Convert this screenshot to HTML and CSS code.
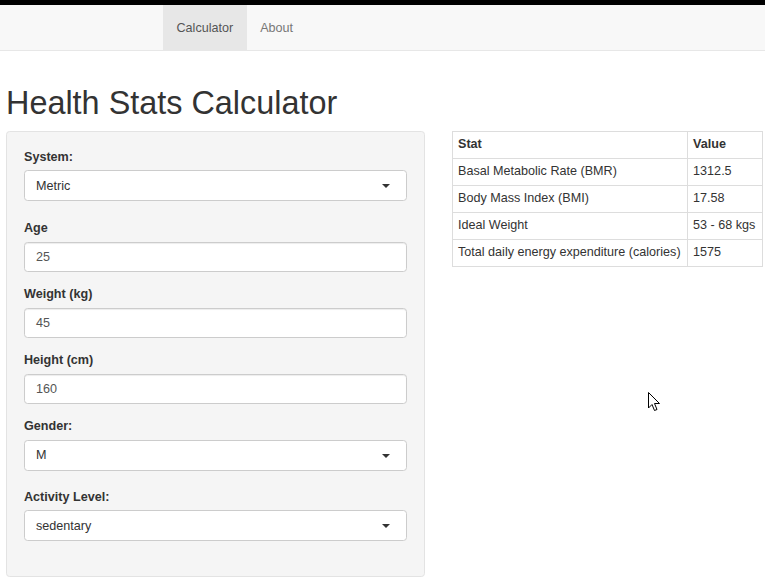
FILE: index.html
```html
<!DOCTYPE html>
<html>
<head>
<meta charset="utf-8">
<title>Health Stats Calculator</title>
<link rel="stylesheet" href="styles.css">
</head>
<body>
<nav class="navbar">
  <ul class="nav">
    <li class="nav-item active">Calculator</li>
    <li class="nav-item">About</li>
  </ul>
</nav>
<main class="page">
  <h1 class="title">Health Stats Calculator</h1>
  <div class="row">
    <form class="well">
      <div class="group group-select">
        <label class="label">System:</label>
        <div class="select">Metric<span class="caret"></span></div>
      </div>
      <div class="group">
        <label class="label">Age</label>
        <div class="input">25</div>
      </div>
      <div class="group">
        <label class="label">Weight (kg)</label>
        <div class="input">45</div>
      </div>
      <div class="group">
        <label class="label">Height (cm)</label>
        <div class="input">160</div>
      </div>
      <div class="group group-select">
        <label class="label">Gender:</label>
        <div class="select">M<span class="caret"></span></div>
      </div>
      <div class="group group-select">
        <label class="label">Activity Level:</label>
        <div class="select">sedentary<span class="caret"></span></div>
      </div>
    </form>
    <div class="results">
      <table class="table">
        <thead>
          <tr><th>Stat</th><th>Value</th></tr>
        </thead>
        <tbody>
          <tr><td>Basal Metabolic Rate (BMR)</td><td>1312.5</td></tr>
          <tr><td>Body Mass Index (BMI)</td><td>17.58</td></tr>
          <tr><td>Ideal Weight</td><td>53 - 68 kgs</td></tr>
          <tr><td>Total daily energy expenditure (calories)</td><td>1575</td></tr>
        </tbody>
      </table>
    </div>
  </div>
</main>
<svg class="cursor" width="13" height="20" viewBox="0 0 13 20">
  <path d="M0.5 0.5 L0.5 16 L4 12.5 L6.5 18.5 L9 17.5 L6.5 11.5 L11.5 11.5 Z" fill="#fff" stroke="#000" stroke-width="1" stroke-linejoin="miter"/>
</svg>
</body>
</html>
```

FILE: styles.css
```css
html, body {
  margin: 0;
  padding: 0;
  background: #fff;
}

body {
  font-family: "Liberation Sans", Arial, sans-serif;
  font-size: 12.6px;
  line-height: 18px;
  color: #333;
  position: relative;
  min-height: 581px;
  overflow: hidden;
}

.navbar {
  border-top: 5px solid #000;
  background: #f8f8f8;
  border-bottom: 1px solid #e7e7e7;
  height: 45px;
}

.nav {
  list-style: none;
  margin: 0;
  padding: 0 0 0 163px;
  display: flex;
}

.nav-item {
  padding: 13.5px 13.5px;
  line-height: 18px;
  color: #777;
}

.nav-item.active {
  background: #e7e7e7;
  color: #555;
}

.page {
  padding: 0 0 0 6px;
}

.title {
  font-size: 32.4px;
  line-height: 35.6px;
  font-weight: 500;
  margin: 35px 0 9.4px 0;
  color: #333;
}

.row {
  display: flex;
  align-items: flex-start;
  gap: 27px;
}

.well {
  box-sizing: border-box;
  width: 419px;
  margin: 0;
  padding: 16px 17px 18px 17px;
  background: #f5f5f5;
  border: 1px solid #e3e3e3;
  border-radius: 3.6px;
}

.group {
  margin-bottom: 13.5px;
}

.group-select {
  margin-bottom: 18px;
}

.group-select:last-child {
  margin-bottom: 17px;
}

.group:nth-child(5) {
  margin-bottom: 17px;
}

.label {
  display: block;
  font-weight: bold;
  margin-bottom: 4.5px;
  line-height: 18px;
}

.input,
.select {
  box-sizing: border-box;
  height: 30px;
  border: 1px solid #ccc;
  border-radius: 3.6px;
  background: #fff;
  padding: 5px 11px;
  line-height: 18px;
  color: #555;
  box-shadow: inset 0 1px 1px rgba(0,0,0,0.075);
}

.select {
  height: 31px;
  color: #333;
  position: relative;
  box-shadow: none;
  padding-top: 5.5px;
}

.caret {
  position: absolute;
  right: 16px;
  top: 13px;
  width: 0;
  height: 0;
  border-left: 4.5px solid transparent;
  border-right: 4.5px solid transparent;
  border-top: 4.5px solid #333;
}

.table {
  border-collapse: collapse;
  border: 1px solid #ddd;
}

.table th,
.table td {
  border: 1px solid #ddd;
  padding: 4.5px 5px 4.5px 5px;
  line-height: 17px;
  text-align: left;
  vertical-align: top;
  white-space: nowrap;
}

.table th:first-child,
.table td:first-child {
  padding-right: 6.5px;
}

.table th:last-child,
.table td:last-child {
  padding-right: 6.5px;
}

.table th {
  font-weight: bold;
}

.cursor {
  position: absolute;
  left: 648px;
  top: 392px;
}
```
